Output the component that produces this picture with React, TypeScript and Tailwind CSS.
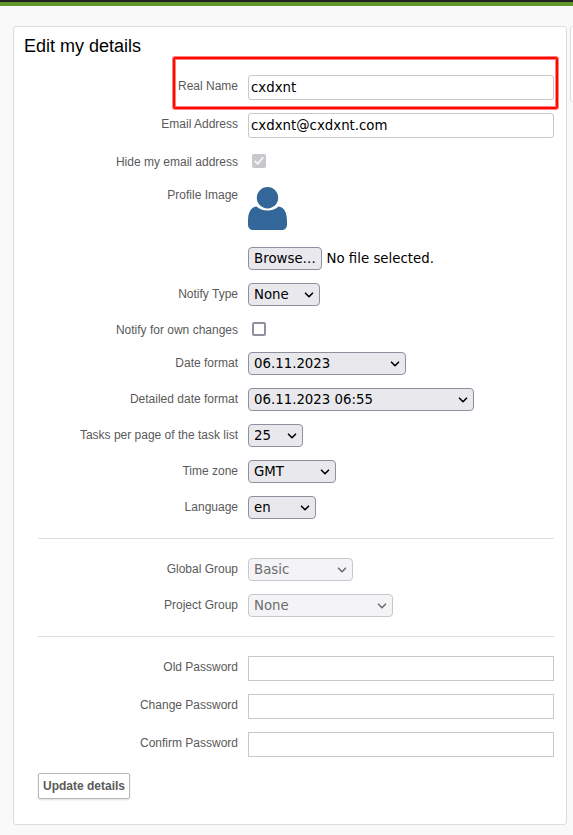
import type { ReactNode } from "react";
import clsx from "clsx";

const controlFont = "font-['DejaVu_Sans',sans-serif] text-[13.333px] leading-4";

function Row({ label, className, labelClass = "pt-px", children }: { label: string; className?: string; labelClass?: string; children: ReactNode }) {
  return (
    <div className={clsx("relative flex gap-2.5", className)}>
      <label className={clsx("w-50 shrink-0 text-right text-[12px] leading-[15px] text-[#5a5a5a]", labelClass)}>{label}</label>
      {children}
    </div>
  );
}

function TextInput({ value = "", rounded = false, type = "text" }: { value?: string; rounded?: boolean; type?: string }) {
  return (
    <input
      type={type}
      defaultValue={value}
      className={clsx("h-[25px] w-[306px] border border-[#c8c8c8] bg-white px-0.5 text-black outline-none", rounded && "rounded-[3px]", controlFont)}
    />
  );
}

function Select({ label, value, width, disabled = false }: { label: string; value: string; width: string; disabled?: boolean }) {
  return (
    <Row label={label} className="mt-[13px]" labelClass="pt-1">
      <button
        type="button"
        disabled={disabled}
        className={clsx(
          "flex h-[23px] items-center justify-between rounded-[4px] border pl-[5px] pr-[5px]",
          controlFont,
          width,
          disabled ? "border-[#c7c7cf] bg-[#f4f4f6] text-[#6d6d6d]" : "border-[#8f8f9d] bg-[#e9e9ed] text-black",
        )}
      >
        <span>{value}</span>
        <svg width="10" height="6" viewBox="0 0 10 6" fill="none" stroke="currentColor" strokeWidth="1.6" strokeLinecap="round" strokeLinejoin="round" className="mt-px">
          <path d="M1.5 1.200 5 4.700 8.500 1.200" />
        </svg>
      </button>
    </Row>
  );
}

function Avatar() {
  return (
    <svg width="39" height="43" viewBox="0 0 39 43" fill="#336699" className="-mt-[0.5px]">
      <circle cx="19.5" cy="10.7" r="10.7" />
      <path d="M8.500 19.500C3 20 0 25.500 0 34v3.500C0 41 2 43 5.500 43h28c3.500 0 5.500-2 5.500-5.500V34c0-8.500-3-14-8.500-14.500-3 2.600-6.500 4-11 4s-8-1.400-11-4Z" />
    </svg>
  );
}

export default function App() {
  return (
    <div className="h-[835px] w-[573px] overflow-hidden bg-[#f9f9f9] font-['Liberation_Sans',Arial,sans-serif]">
      <div className="h-0.5 bg-[#222]" />
      <div className="h-1 bg-[#5f9729]" />
      <div className="flex gap-[3px] pl-[13px] pt-5">
        <main className="h-[799px] w-[554px] shrink-0 rounded-[3px] border border-[#ddd] bg-white">
          <h2 className="h-12 pl-2.5 pt-2 text-[18px] leading-[22px] text-black">Edit my details</h2>
          <form className="pl-6 pr-3">
            <Row label="Real Name" labelClass="pt-1">
              <TextInput value="cxdxnt" rounded />
              <div className="pointer-events-none absolute -top-[18px] left-[135px] h-[52px] w-[385px] rounded-[2px] border-2 border-[#ff0800] shadow-[0_0_0_1px_#ff080080,inset_0_0_0_1px_#ff080080]" />
            </Row>
            <Row label="Email Address" className="mt-[13px]" labelClass="pt-1">
              <TextInput value="cxdxnt@cxdxnt.com" rounded />
            </Row>
            <Row label="Hide my email address" className="mt-4 h-3.5">
              <span className="ml-1 flex size-3.5 items-center justify-center rounded-[2px] bg-[#c7c7cc]">
                <svg width="14" height="14" viewBox="0 0 14 14" fill="none" stroke="#f4f4f6" strokeWidth="2" strokeLinecap="round" strokeLinejoin="round">
                  <path d="m3.300 7.500 2.400 2.400 5-6" />
                </svg>
              </span>
            </Row>
            <Row label="Profile Image" className="mt-[19px] h-[60px]">
              <Avatar />
            </Row>
            <div className={clsx("ml-[210px] flex items-center gap-[4.5px] text-black", controlFont)}>
              <button type="button" className="h-[23px] w-[74px] rounded-[4px] border border-[#8f8f9d] bg-[#e9e9ed]">Browse…</button>
              <span>No file selected.</span>
            </div>
            <Select label="Notify Type" value="None" width="w-[72px]" />
            <Row label="Notify for own changes" className="mt-4 h-3.5">
              <span className="ml-1 size-3.5 rounded-[2px] border-2 border-[#8f8f9d] bg-white" />
            </Row>
            <div className="h-[3px]" />
            <Select label="Date format" value="06.11.2023" width="w-[158px]" />
            <Select label="Detailed date format" value="06.11.2023 06:55" width="w-[226px]" />
            <Select label="Tasks per page of the task list" value="25" width="w-[55px]" />
            <Select label="Time zone" value="GMT" width="w-[88px]" />
            <Select label="Language" value="en" width="w-[68px]" />
            <hr className="mb-[19px] mt-[19px] border-[#ddd]" />
            <Select label="Global Group" value="Basic" width="w-[105px]" disabled />
            <Select label="Project Group" value="None" width="w-[145px]" disabled />
            <hr className="mb-[19px] mt-[19px] border-[#ddd]" />
            <Row label="Old Password" labelClass="pt-1">
              <TextInput type="password" />
            </Row>
            <Row label="Change Password" className="mt-[13px]" labelClass="pt-1">
              <TextInput type="password" />
            </Row>
            <Row label="Confirm Password" className="mt-[13px]" labelClass="pt-1">
              <TextInput type="password" />
            </Row>
            <button type="button" className="mt-4 block h-[26px] w-[92px] whitespace-nowrap rounded-[2px] border border-[#b8b8b8] bg-white text-[12px] font-bold leading-[15px] text-[#5a5a5a] shadow-[0_1px_2px_#0002]">
              Update details
            </button>
          </form>
        </main>
        <aside className="h-[76px] w-10 shrink-0 rounded-[3px] border border-[#ddd] bg-white" />
      </div>
    </div>
  );
}
